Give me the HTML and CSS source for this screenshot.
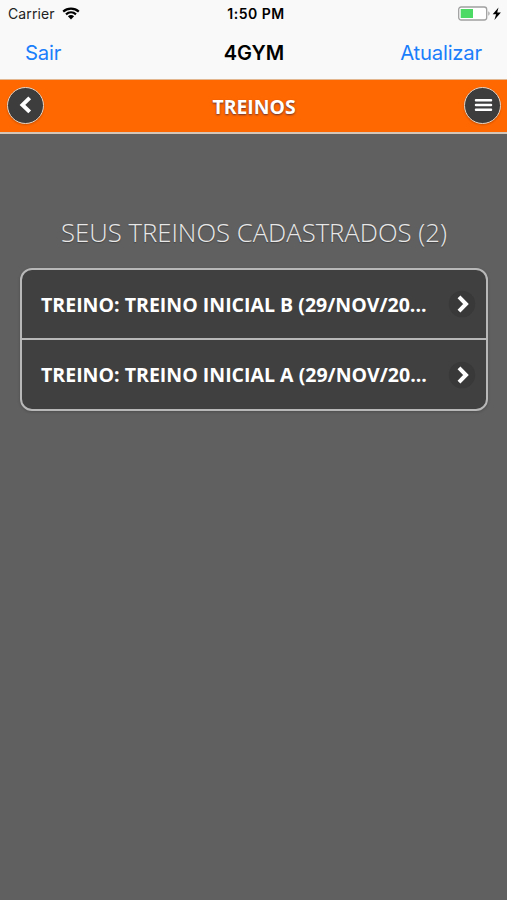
FILE: index.html
```
<!DOCTYPE html>
<html lang="pt-BR">

<head>
    <meta charset="UTF-8">
    <meta name="viewport" content="width=device-width, initial-scale=1.0">
    <title>4GYM</title>
    <link rel="stylesheet" href="styles.css">
</head>

<body>
    <div class="status">
        <div class="operadora">
            <span class="carrier">Carrier</span>
            <svg class="wifi" width="18" height="13" viewBox="0 0 18 13">
                <path d="M1.200 4.600C5.600.6 12.400.6 16.800 4.600M4 7.400c2.900-2.600 7.100-2.600 10 0" fill="none" stroke="#000" stroke-width="2.200" />
                <path d="M5.900 9.300c1.800-1.600 4.400-1.600 6.200 0L9 12.500z" />
            </svg>
        </div>
        <span class="hora">1:50 PM</span>
        <svg class="bateria" width="44" height="16" viewBox="0 0 44 16">
            <rect x=".7" y="1" width="28" height="13" rx="2.500" fill="#fff" stroke="#a0a0a0" stroke-width="1.300" />
            <rect x="2.700" y="3" width="12.300" height="9" fill="#4cd964" />
            <path d="M30.300 5.300c1.800.8 1.800 3.600 0 4.400z" fill="#a0a0a0" />
            <path d="M40.500 1.500l-5.800 6.800h3.400L36.400 14l6.500-7.500h-3.700z" />
        </svg>
    </div>
    <div class="navegacao">
        <a class="link">Sair</a>
        <span class="titulo-app">4GYM</span>
        <a class="link link-atualizar">Atualizar</a>
    </div>
    <header class="cabecalho">
        <button class="botao-redondo">
            <svg width="34" height="34" viewBox="0 0 34 34">
                <path d="M20.700 9.900l-7.200 7 7.200 7" fill="none" stroke="#fff" stroke-width="4" />
            </svg>
        </button>
        <h1 class="titulo">TREINOS</h1>
        <button class="botao-redondo">
            <svg width="34" height="34" viewBox="0 0 34 34">
                <path d="M10 12.200h15M10 17h15M10 21.800h15" stroke="#fff" stroke-width="2.500" stroke-linecap="round" />
            </svg>
        </button>
    </header>
    <main class="conteudo">
        <h2 class="subtitulo">SEUS TREINOS CADASTRADOS (2)</h2>
        <ul class="lista">
            <li class="item">
                <span class="nome">TREINO: TREINO INICIAL B (29/NOV/20...</span>
                <svg class="seta" width="28" height="28" viewBox="0 0 28 28">
                    <circle cx="14" cy="14" r="13.300" fill="#393939" />
                    <path d="M11 6.800l7 7.200-7 7.200" fill="none" stroke="#fff" stroke-width="4" />
                </svg>
            </li>
            <li class="item">
                <span class="nome">TREINO: TREINO INICIAL A (29/NOV/20...</span>
                <svg class="seta" width="28" height="28" viewBox="0 0 28 28">
                    <circle cx="14" cy="14" r="13.300" fill="#393939" />
                    <path d="M11 6.800l7 7.200-7 7.200" fill="none" stroke="#fff" stroke-width="4" />
                </svg>
            </li>
        </ul>
    </main>
</body>

</html>
```

FILE: styles.css
```
* {
    box-sizing: border-box;
}

body {
    margin: 0;
    height: 100vh;
    overflow: hidden;
    background-color: #606060;
    font-family: "Open Sans", sans-serif;
    color: #fff;
}

.status,
.navegacao {
    display: grid;
    grid-template-columns: 1fr auto 1fr;
    align-items: center;
    background-color: #f9f9f9;
    color: #000;
    font-family: Inter, "Liberation Sans", sans-serif;
}

.status {
    height: 27px;
    padding: 0 5px 0 8px;
    font-size: 14px;
}

.operadora {
    display: flex;
    align-items: center;
    gap: 7px;
}

.carrier {
    color: #222;
    letter-spacing: 0.1px;
}

.hora {
    padding-left: 2px;
    font-size: 14px;
    font-weight: 600;
    letter-spacing: 0.5px;
}

.bateria {
    justify-self: end;
}

.navegacao {
    height: 52px;
    padding: 0 25px 2px;
    font-size: 20.3px;
}

.link {
    color: #1a7efb;
    letter-spacing: -0.2px;
}

.link-atualizar {
    justify-self: end;
}

.titulo-app {
    padding: 2px 0 0 1px;
    font-size: 20px;
    font-weight: 600;
}

.cabecalho {
    display: flex;
    align-items: center;
    justify-content: space-between;
    height: 55px;
    padding: 0 6px 2px 7px;
    border-top: 1px solid #e3b78f;
    border-bottom: 2px solid #d5c6ba;
    background-color: #ff6700;
}

.botao-redondo {
    display: flex;
    align-items: center;
    justify-content: center;
    width: 37px;
    height: 37px;
    padding: 0;
    border: 1.5px solid #e8d5c5;
    border-radius: 50%;
    background-color: #3d3d3d;
    box-shadow: 0 1px 2px rgba(0, 0, 0, 0.2);
}

.titulo {
    margin: 2px 0 0;
    font-size: 19.4px;
    font-weight: 700;
    text-shadow: 0 1px 2px #633;
}

.conteudo {
    padding: 80px 19px 0 20px;
}

.subtitulo {
    margin: 0;
    height: 54px;
    line-height: 37px;
    font-size: 25.7px;
    font-weight: 300;
    text-align: center;
    white-space: nowrap;
    color: #e8e8e8;
    text-shadow: 0 1px 1px #444;
}

.lista {
    margin: 0;
    padding: 0;
    list-style: none;
    border: 2px solid #b8b8b8;
    border-radius: 12px;
    background-color: #404040;
    box-shadow: 0 1px 3px rgba(0, 0, 0, 0.2);
}

.item {
    display: flex;
    align-items: center;
    justify-content: space-between;
    height: 69px;
    padding: 0 10px 0 19px;
}

.item:not(:last-child) {
    height: 70px;
    border-bottom: 2px solid #b8b8b8;
}

.nome {
    font-size: 19.55px;
    font-weight: 700;
    white-space: nowrap;
}
```
